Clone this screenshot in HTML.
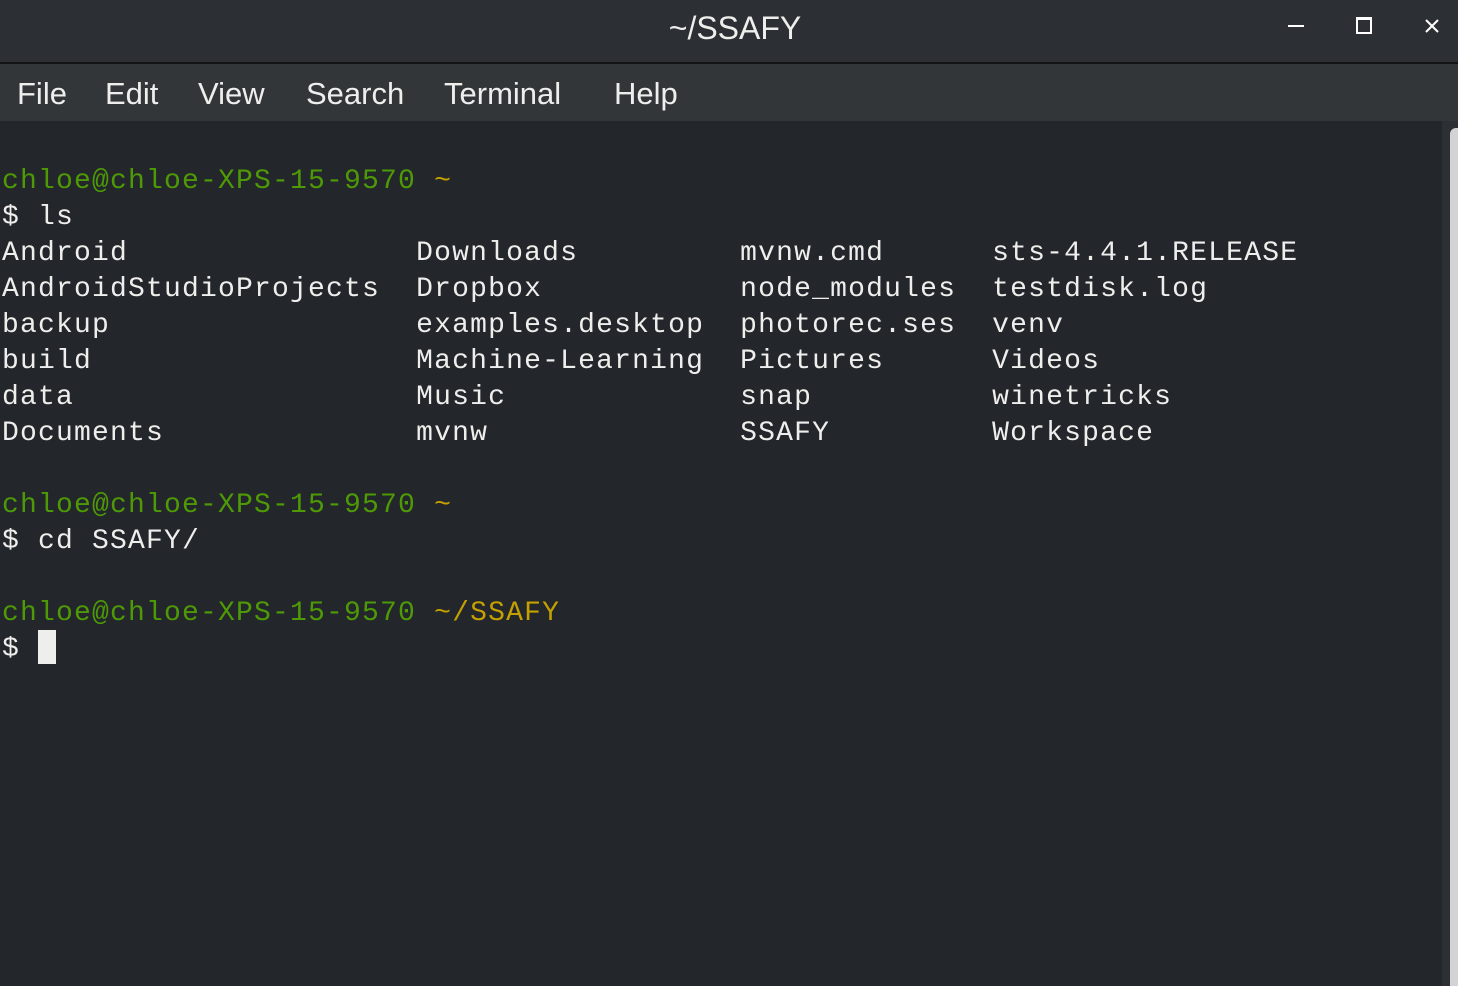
<!DOCTYPE html>
<html><head><meta charset="utf-8"><style>
*{margin:0;padding:0;box-sizing:border-box}
body{width:1458px;height:986px;background:#23262a;position:relative;overflow:hidden;font-family:"Liberation Sans",sans-serif}
#title{position:absolute;left:0;top:0;width:1458px;height:62px;background:#2c2f33}
#line{position:absolute;left:0;top:62px;width:1458px;height:2px;background:#121314}
#menu{position:absolute;left:0;top:64px;width:1458px;height:57px;background:#323639}
.m{position:absolute;top:74px;color:#eeeeec;font-size:31px;line-height:40px}
#t{position:absolute;left:6px;width:1458px;text-align:center;top:8px;color:#eeeeec;font-size:32px;line-height:40px}
#term{position:absolute;left:2px;top:164px;font-family:"Liberation Mono",monospace;font-size:28px;letter-spacing:1.2px;line-height:36px;color:#eeeeec;white-space:pre}
.g{color:#4e9a06}.y{color:#c4a000}
#sb{position:absolute;left:1442px;top:121px;width:16px;height:865px;background:#2c2f33}
#th{position:absolute;left:1450px;top:128px;width:8px;height:858px;background:#d3d3d3;border-radius:6px 0 0 0}
#cur{position:absolute;left:38px;top:630px;width:18px;height:34px;background:#eeeeec}
</style></head><body>
<div id="title"><div id="t">~/SSAFY</div>
<div style="position:absolute;left:1288px;top:25px;width:16px;height:2px;background:#fff"></div>
<div style="position:absolute;left:1356px;top:17px;width:16px;height:17px;border:2px solid #fff;border-top-width:3px"></div>
<svg style="position:absolute;left:1425px;top:19px" width="14" height="14"><path d="M1 1L13 13M13 1L1 13" stroke="#fff" stroke-width="2"/></svg>
</div>
<div id="line"></div>
<div id="menu"></div>
<div class="m" style="left:17px">File</div>
<div class="m" style="left:105px">Edit</div>
<div class="m" style="left:198px">View</div>
<div class="m" style="left:306px">Search</div>
<div class="m" style="left:444px">Terminal</div>
<div class="m" style="left:614px">Help</div>
<div id="term"><span class="g">chloe@chloe-XPS-15-9570</span> <span class="y">~</span>
$ ls
Android                Downloads         mvnw.cmd      sts-4.4.1.RELEASE
AndroidStudioProjects  Dropbox           node_modules  testdisk.log
backup                 examples.desktop  photorec.ses  venv
build                  Machine-Learning  Pictures      Videos
data                   Music             snap          winetricks
Documents              mvnw              SSAFY         Workspace

<span class="g">chloe@chloe-XPS-15-9570</span> <span class="y">~</span>
$ cd SSAFY/

<span class="g">chloe@chloe-XPS-15-9570</span> <span class="y">~/SSAFY</span>
$ </div>
<div id="cur"></div>
<div id="sb"></div><div id="th"></div>
</body></html>
